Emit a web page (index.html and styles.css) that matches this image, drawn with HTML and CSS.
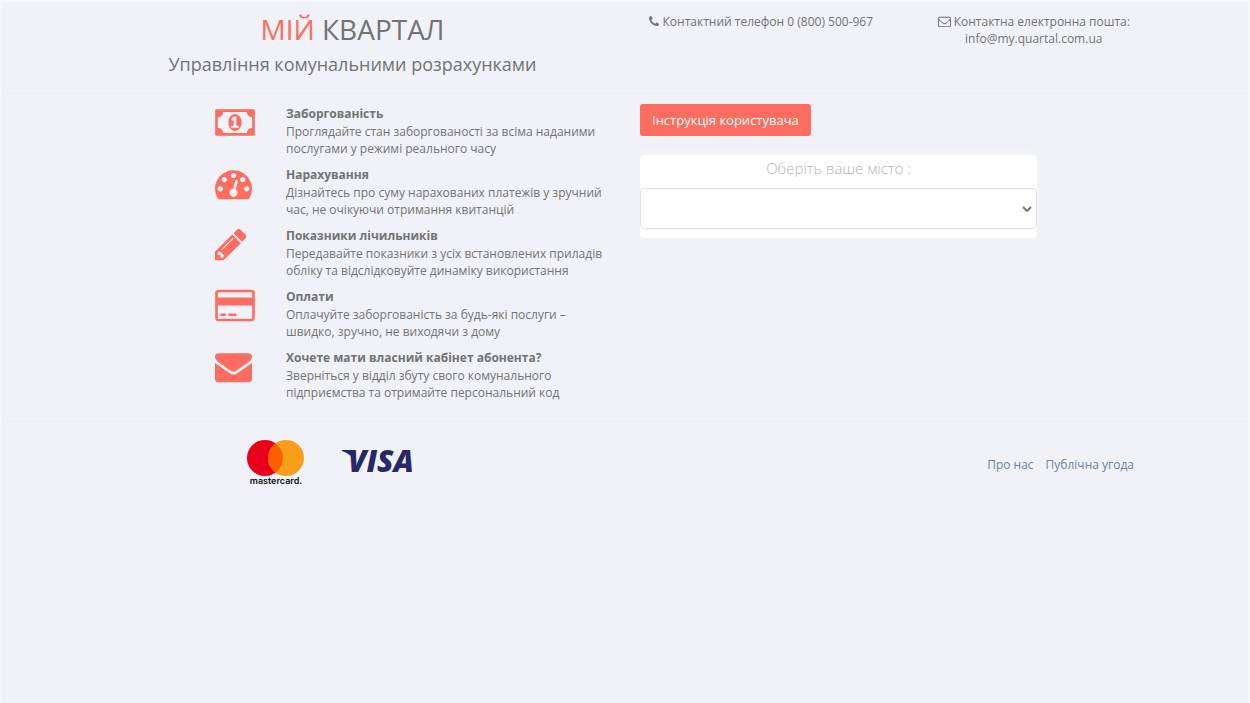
FILE: index.html
```html
<!doctype html>
<html lang="uk">
<head>
    <meta charset="utf-8">
    <title>Мій квартал</title>
    <meta name="viewport" content="width=device-width, initial-scale=1.0">
    <link rel="stylesheet" href="styles.css">
</head>
<body>

<header class="header">
    <div class="container header-row">
        <div class="brand">
            <h1><span class="accent">МІЙ</span> КВАРТАЛ</h1>
            <h2>Управління комунальними розрахунками</h2>
        </div>
        <div class="contact">
            <svg class="fa fa-phone" viewBox="192 0 1408 1792"><path d="M1600 1240q0 27-10 70.5t-21 68.5q-21 50-122 106-94 51-186 51-27 0-53-3.5t-57.5-12.5-47-14.5-55.5-20.5-49-18q-98-35-175-83-127-79-264-216t-216-264q-48-77-83-175-3-9-18-49t-20.5-55.5-14.5-47-12.5-57.5-3.5-53q0-92 51-186 56-101 106-122 25-11 68.5-21t70.5-10q14 0 21 3 18 6 53 76 11 19 30 54t35 63.5 31 53.5q3 4 17.5 25t21.5 35.5 7 28.5q0 20-28.5 50t-62 55-62 53-28.5 46q0 9 5 22.5t8.5 20.5 14 24 11.5 19q76 137 174 235t235 174q2 1 19 11.5t24 14 20.5 8.5 22.5 5q18 0 46-28.5t53-62 55-62 50-28.5q14 0 28.5 7t35.5 21.5 25 17.5q25 15 53.5 31t63.5 35 54 30q70 35 76 53 3 7 3 21z"/></svg>
            Контактний телефон 0 (800) 500-967
        </div>
        <div class="contact">
            <svg class="fa" viewBox="0 0 1792 1792"><path d="M1664 1504v-768q-32 36-69 66-268 206-426 338-51 43-83 67t-86.5 48.5-102.5 24.5h-2q-48 0-102.5-24.5t-86.5-48.5-83-67q-158-132-426-338-37-30-69-66v768q0 13 9.5 22.5t22.5 9.5h1472q13 0 22.5-9.5t9.5-22.5zm0-1051v-24.5l-.5-13-3-12.5-5.5-9-9-7.5-14-2.5h-1472q-13 0-22.5 9.5t-9.5 22.5q0 168 147 284 193 152 401 317 6 5 35 29.5t46 37.5 44.5 31.5 50.5 27.5 43 9h2q20 0 43-9t50.5-27.5 44.5-31.5 46-37.5 35-29.5q208-165 401-317 54-43 100.5-115.5t46.5-131.5zm128-37v1088q0 66-47 113t-113 47h-1472q-66 0-113-47t-47-113v-1088q0-66 47-113t113-47h1472q66 0 113 47t47 113z"/></svg>
            Контактна електронна пошта:<br>info@my.quartal.com.ua
        </div>
    </div>
</header>

<main class="main">
    <div class="container main-row">
        <ul class="features">
            <li>
                <!-- money -->
                <svg class="icon icon-wide" viewBox="0 0 1920 1792"><path fill-rule="evenodd" d="M64 256H1856Q1920 256 1920 320V1472Q1920 1536 1856 1536H64Q0 1536 0 1472V320Q0 256 64 256zM384 384Q384 490 309 565T128 640V1152Q234 1152 309 1227T384 1408H1536Q1536 1302 1611 1227T1792 1152V640Q1686 640 1611 565T1536 384zM960 490C1140 490 1280 670 1280 896S1140 1302 960 1302 640 1122 640 896 780 490 960 490zM768 1152H1152V1056H1024V608H910L762 745 839 825 896 775V1056H768z"/></svg>
                <div class="feature-text">
                    <h3>Заборгованість</h3>
                    <p>Проглядайте стан заборгованості за всіма наданими послугами у режимі реального часу</p>
                </div>
            </li>
            <li>
                <!-- tachometer -->
                <svg class="icon" viewBox="0 0 1792 1792"><path d="M384 1152q0-53-37.5-90.5t-90.5-37.5-90.5 37.5-37.5 90.5 37.5 90.5 90.5 37.5 90.5-37.5 37.5-90.5zm192-448q0-53-37.5-90.5t-90.5-37.5-90.5 37.5-37.5 90.5 37.5 90.5 90.5 37.5 90.5-37.5 37.5-90.5zm428 481l101-382q6-26-7.5-48.5t-38.5-29.5-48 6.5-30 39.5l-101 382q-60 5-107 43.5t-63 98.5q-20 77 20 146t117 89 146-20 89-117q16-60-6-117t-72-91zm660-33q0-53-37.5-90.5t-90.5-37.5-90.5 37.5-37.5 90.5 37.5 90.5 90.5 37.5 90.5-37.5 37.5-90.5zm-640-640q0-53-37.5-90.5t-90.5-37.5-90.5 37.5-37.5 90.5 37.5 90.5 90.5 37.5 90.5-37.5 37.5-90.5zm448 192q0-53-37.5-90.5t-90.5-37.5-90.5 37.5-37.5 90.5 37.5 90.5 90.5 37.5 90.5-37.5 37.5-90.5zm320 448q0 261-141 483-19 29-54 29h-1402q-35 0-54-29-141-221-141-483 0-182 71-348t191-286 286-191 348-71 348 71 286 191 191 286 71 348z"/></svg>
                <div class="feature-text">
                    <h3>Нарахування</h3>
                    <p>Дізнайтесь про суму нарахованих платежів у зручний час, не очікуючи отримання квитанцій</p>
                </div>
            </li>
            <li>
                <!-- pencil -->
                <svg class="icon" viewBox="128 0 1792 1792"><path d="M491 1536l91-91-235-235-91 91v107h128v128h107zm523-928q0-22-22-22-10 0-17 7l-542 542q-7 7-7 17 0 22 22 22 10 0 17-7l542-542q7-7 7-17zm-54-192l416 416-832 832h-416v-416zm683 96q0 53-37 90l-166 166-416-416 166-165q36-38 90-38 53 0 91 38l235 234q37 39 37 91z"/></svg>
                <div class="feature-text">
                    <h3>Показники лічильників</h3>
                    <p>Передавайте показники з усіх встановлених приладів обліку та відслідковуйте динаміку використання</p>
                </div>
            </li>
            <li>
                <!-- credit card -->
                <svg class="icon icon-wide" viewBox="0 0 1920 1792"><path fill-rule="evenodd" d="M160 128H1760Q1826 128 1873 175T1920 288V1504Q1920 1570 1873 1617T1760 1664H160Q94 1664 47 1617T0 1504V288Q0 222 47 175T160 128zM160 256Q128 256 128 288V512H1792V288Q1792 256 1760 256zM128 896V1504Q128 1536 160 1536H1760Q1792 1536 1792 1504V896zM256 1280H512V1408H256zM640 1280H1024V1408H640z"/></svg>
                <div class="feature-text">
                    <h3>Оплати</h3>
                    <p>Оплачуйте заборгованість за будь-які послуги – швидко, зручно, не виходячи з дому</p>
                </div>
            </li>
            <li>
                <!-- envelope -->
                <svg class="icon" viewBox="0 0 1792 1792"><path d="M1792 710v794q0 66-47 113t-113 47h-1472q-66 0-113-47t-47-113v-794q44 49 101 87 362 246 497 345 57 42 92.5 65.5t94.5 48 110 24.5h2q51 0 110-24.5t94.5-48 92.5-65.5q170-123 498-345 57-39 100-87zm0-294q0 79-49 151t-122 123q-376 261-468 325-10 7-42.5 30.5t-54 38-52 32.5-57.5 27-50 9h-2q-23 0-50-9t-57.5-27-52-32.5-54-38-42.5-30.5q-91-64-262-182.5t-205-142.5q-62-42-117-115.5t-55-136.5q0-78 41.5-130t118.5-52h1472q65 0 112.5 47t47.5 113z"/></svg>
                <div class="feature-text">
                    <h3>Хочете мати власний кабінет абонента?</h3>
                    <p>Зверніться у відділ збуту свого комунального підприємства та отримайте персональний код</p>
                </div>
            </li>
        </ul>

        <div class="login">
            <button type="button" class="btn">Інструкція користувача</button>
            <hr>
            <form class="city-form">
                <label for="city">Оберіть ваше місто :</label>
                <div class="select-wrap">
                    <select id="city" name="city">
                        <option value=""></option>
                    </select>
                    <svg class="arrow" viewBox="0 0 10 6"><path d="M1 1l4 4 4-4"/></svg>
                </div>
            </form>
        </div>
    </div>
</main>

<footer class="container footer">
    <div class="cards">
        <svg class="mastercard" viewBox="0 0 60 50" role="img" aria-label="mastercard">
            <circle cx="20" cy="19" r="18" fill="#eb001b"/>
            <circle cx="41" cy="19" r="18" fill="#f79e1b"/>
            <path d="M30.500 4.400a18 18 0 0 1 0 29.200a18 18 0 0 1 0-29.200z" fill="#ff5f00"/>
            <text x="31" y="45" text-anchor="middle">mastercard.</text>
        </svg>
        <svg class="visa" viewBox="0 0 84 40" role="img" aria-label="VISA">
            <path d="M1 11h10q3 0 3 3v9Q9 14 1 12z"/>
            <text x="7" y="33">VISA</text>
        </svg>
    </div>
    <nav class="links">
        <a href="#about">Про нас</a>
        <a href="#offer">Публічна угода</a>
    </nav>
</footer>

</body>
</html>
```

FILE: styles.css
```css
* {
    box-sizing: border-box;
}
body {
    margin: 0;
    min-height: 100vh;
    border: 2px solid #f6f7fb;
    border-bottom: 0;
    background: #f1f2f7;
    color: #737373;
    font-family: "Open Sans", "Noto Sans", sans-serif;
    font-size: 12px;
    line-height: 17px;
}
h1, h2, h3, p, ul {
    margin: 0;
    padding: 0;
}
.container {
    max-width: 1090px;
    margin: 0 auto;
}

/* header */
.header {
    border-bottom: 1px solid #eeeef1;
}
.header-row {
    display: grid;
    grid-template-columns: 2fr 1fr 1fr;
    padding: 11px 0 17px;
    text-align: center;
}
.brand h1 {
    font-size: 28px;
    font-weight: 400;
    line-height: 33px;
}
.brand h2 {
    font-size: 18px;
    font-weight: 400;
    line-height: 24px;
    margin-top: 6px;
}
.accent {
    color: #ff6c60;
}
.fa {
    width: 13px;
    height: 13px;
    fill: currentColor;
    vertical-align: -2px;
}
.fa-phone {
    width: 10px;
}

/* features */
.main {
    border-bottom: 1px solid #eeeef1;
}
.main-row {
    display: grid;
    grid-template-columns: 1fr 1fr;
    padding: 10px 0 18px;
}
.features {
    list-style: none;
    padding-left: 135px;
}
.features li {
    display: grid;
    grid-template-columns: 71px 1fr;
    margin-bottom: 8px;
}
.icon {
    width: 37px;
    height: 37px;
    fill: #ff6c60;
}
.icon-wide {
    width: 40px;
}
.feature-text {
    padding-right: 14px;
}
.feature-text h3 {
    font-size: 12px;
    font-weight: 700;
    line-height: 19px;
}
.features li:last-child {
    margin-bottom: 2px;
}

/* city form */
.login {
    padding-left: 15px;
    max-width: 412px;
}
.btn {
    display: block;
    height: 32px;
    padding: 0 12px;
    border: 0;
    border-radius: 3px;
    background: #ff6c60;
    color: #fff;
    font-family: inherit;
    font-size: 13px;
}
.login hr {
    margin: 9px 0;
    border: 0;
    border-top: 1px solid #eeeef1;
}
.city-form {
    padding-bottom: 9px;
    border-radius: 4px;
    background: #fff;
}
.city-form label {
    display: block;
    height: 33px;
    color: #b5b5b5;
    font-size: 15px;
    font-weight: 300;
    line-height: 26px;
    text-align: center;
}
.select-wrap {
    position: relative;
}
.select-wrap select {
    display: block;
    width: 100%;
    height: 41px;
    padding: 0 24px 0 12px;
    border: 1px solid #e2e2e4;
    border-radius: 4px;
    background: #fff;
    color: #737373;
    font: inherit;
    appearance: none;
}
.arrow {
    position: absolute;
    right: 5px;
    top: 18px;
    width: 10px;
    height: 6px;
    fill: none;
    stroke: #777;
    stroke-width: 2;
    pointer-events: none;
}

/* footer */
.footer {
    display: flex;
    justify-content: space-between;
    align-items: center;
    padding: 17px 36px 0 165px;
}
.cards {
    display: flex;
    gap: 36px;
}
.mastercard {
    width: 60px;
    height: 50px;
}
.mastercard text {
    fill: #111;
    font-family: Inter, "Open Sans", sans-serif;
    font-size: 9px;
    font-weight: 600;
}
.visa {
    width: 84px;
    height: 40px;
    fill: #26286b;
}
.visa text {
    font-size: 30px;
    font-style: italic;
    font-weight: 800;
}
.links {
    display: flex;
    gap: 12px;
}
.links a {
    color: #6883a3;
    text-decoration: none;
}
```
